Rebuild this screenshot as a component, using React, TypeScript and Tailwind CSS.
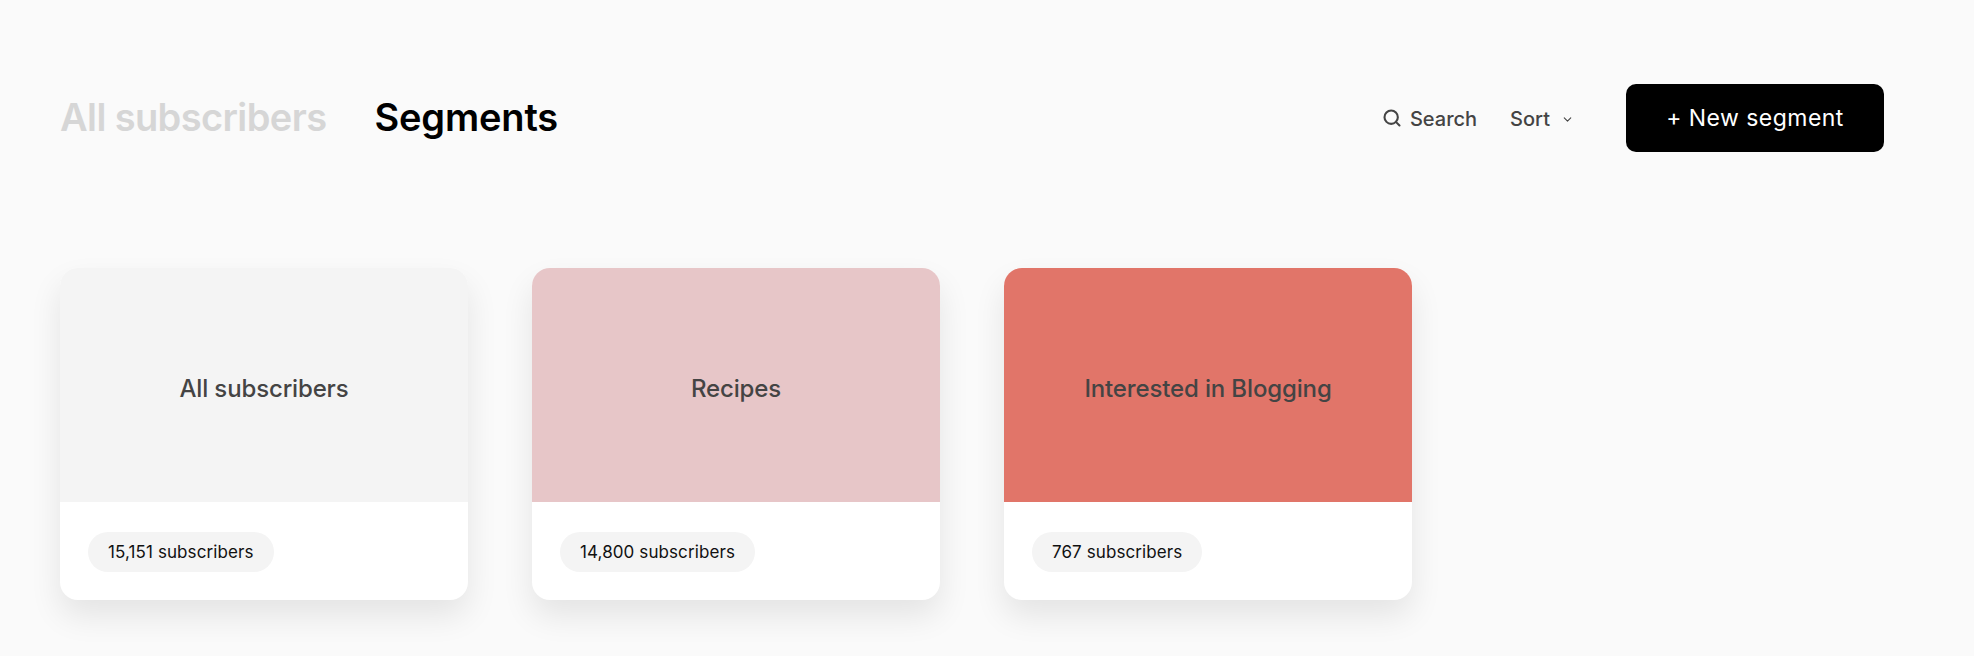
import { ChevronDown, Search } from "lucide-react";

const segments = [
  { name: "All subscribers", count: "15,151 subscribers", tone: "bg-[#f4f4f4]" },
  { name: "Recipes", count: "14,800 subscribers", tone: "bg-[#e7c6c8]" },
  { name: "Interested in Blogging", count: "767 subscribers", tone: "bg-[#e17569]" },
];

function SegmentCard({ name, count, tone }: { name: string; count: string; tone: string }) {
  return (
    <article className="w-[408px] overflow-hidden rounded-[18px] bg-white shadow-[0_16px_32px_rgba(0,0,0,0.09)]">
      <div className={`flex h-[234px] items-center justify-center pt-[7px] text-[24px] font-medium tracking-[-0.006em] text-[#444444] ${tone}`}>
        {name}
      </div>
      <div className="flex h-[98px] items-center px-7 pt-[2px]">
        <span className="flex h-10 items-center rounded-full bg-[#f4f4f4] px-5 pt-[1px] text-[17px] tracking-[0.006em] text-[#111111]">{count}</span>
      </div>
    </article>
  );
}

export default function App() {
  return (
    <div className="h-[656px] overflow-hidden bg-[#fafafa] pl-[60px] pr-[90px] pt-[84px] font-['Inter',sans-serif]">
      <header className="flex h-[68px] items-center">
        <h1 className="-mt-[2px] text-[38px] font-semibold tracking-[-0.016em] text-[#d6d6d6]">All subscribers</h1>
        <h1 className="-mt-[2px] ml-[48px] text-[38px] font-semibold tracking-[-0.004em] text-black">Segments</h1>
        <div className="ml-auto flex items-center text-[20px] font-medium text-[#444444]">
          <button className="flex items-center gap-[8px] pt-[2px]">
            <Search className="-mt-[2px]" size={20} strokeWidth={2.5} />
            Search
          </button>
          <button className="ml-[33px] flex items-center gap-[11px] pt-[2px]">
            Sort
            <ChevronDown size={13} strokeWidth={2} />
          </button>
          <button className="ml-[52px] flex h-[68px] w-[258px] items-center justify-center rounded-[10px] bg-black text-[23px] font-normal tracking-[0.02em] text-white">
            + New segment
          </button>
        </div>
      </header>
      <main className="mt-[116px] flex gap-16">
        {segments.map((segment) => (
          <SegmentCard key={segment.name} {...segment} />
        ))}
      </main>
    </div>
  );
}
